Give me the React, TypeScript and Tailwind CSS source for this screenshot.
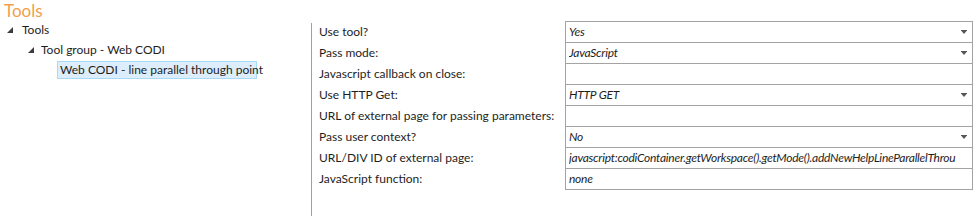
import React from "react";

const Tri = () => (
  <svg width="6" height="6" viewBox="0 0 6 6" className="shrink-0">
    <polygon points="6,0 6,6 0,6" fill="#3c3c3c" />
  </svg>
);

const Caret = () => (
  <svg width="6" height="4" viewBox="0 0 6 4" className="shrink-0">
    <rect x="0" y="0" width="6" height="1" fill="#555" />
    <polygon points="0.5,1 5.5,1 3,4" fill="#555" />
  </svg>
);

type Row = { label: string; value: string; dropdown?: boolean };

const rows: Row[] = [
  { label: "Use tool?", value: "Yes", dropdown: true },
  { label: "Pass mode:", value: "JavaScript", dropdown: true },
  { label: "Javascript callback on close:", value: "" },
  { label: "Use HTTP Get:", value: "HTTP GET", dropdown: true },
  { label: "URL of external page for passing parameters:", value: "" },
  { label: "Pass user context?", value: "No", dropdown: true },
  {
    label: "URL/DIV ID of external page:",
    value: "javascript:codiContainer.getWorkspace().getMode().addNewHelpLineParallelThrou",
  },
  { label: "JavaScript function:", value: "none" },
];

export default function App() {
  return (
    <div
      className="w-[976px] h-[216px] bg-white overflow-hidden text-[#1e1e1e] flex flex-col"
      style={{ fontFamily: 'Lato, "Noto Sans", sans-serif' }}
    >
      <div className="h-[20px] pt-[2px] pl-[4px] text-[17px] leading-[17px] text-[#f0a04e] whitespace-nowrap">
        Tools
      </div>
      <div className="flex flex-1 min-h-0">
        <div className="w-[311px] shrink-0 text-[12px] whitespace-nowrap">
          <div className="h-[20px] flex items-center pl-[7px] gap-[9px]">
            <Tri />
            <span>Tools</span>
          </div>
          <div className="h-[20px] flex items-center pl-[28px] gap-[7px]">
            <Tri />
            <span>Tool group - Web CODI</span>
          </div>
          <div className="h-[20px] flex items-center pl-[57px]">
            <div className="h-[18px] w-[200px] border border-[#a9d9f7] bg-[#dcedfc] flex items-center pl-[2px]">
              Web CODI - line parallel through point
            </div>
          </div>
        </div>
        <div className="w-px shrink-0 bg-[#a0a0a0] mt-[3px]" />
        <div className="flex-1 min-w-0 pt-[1px] pl-[7px] pr-[3px] text-[12px]">
          {rows.map((r, i) => (
            <div key={i} className="flex h-[21px]">
              <div className="w-[246px] shrink-0 flex items-center pt-[1px] whitespace-nowrap">{r.label}</div>
              <div
                className={
                  "flex-1 min-w-0 flex items-center border-x border-t border-[#a3a3a3] pl-[3px] pr-[5px] overflow-hidden " +
                  (i === rows.length - 1 ? "border-b h-[22px]" : "h-[21px]")
                }
              >
                <span className="flex-1 min-w-0 italic whitespace-nowrap overflow-hidden text-[12px] tracking-[-0.25px]">
                  {r.value}
                </span>
                {r.dropdown && <Caret />}
              </div>
            </div>
          ))}
        </div>
      </div>
    </div>
  );
}
